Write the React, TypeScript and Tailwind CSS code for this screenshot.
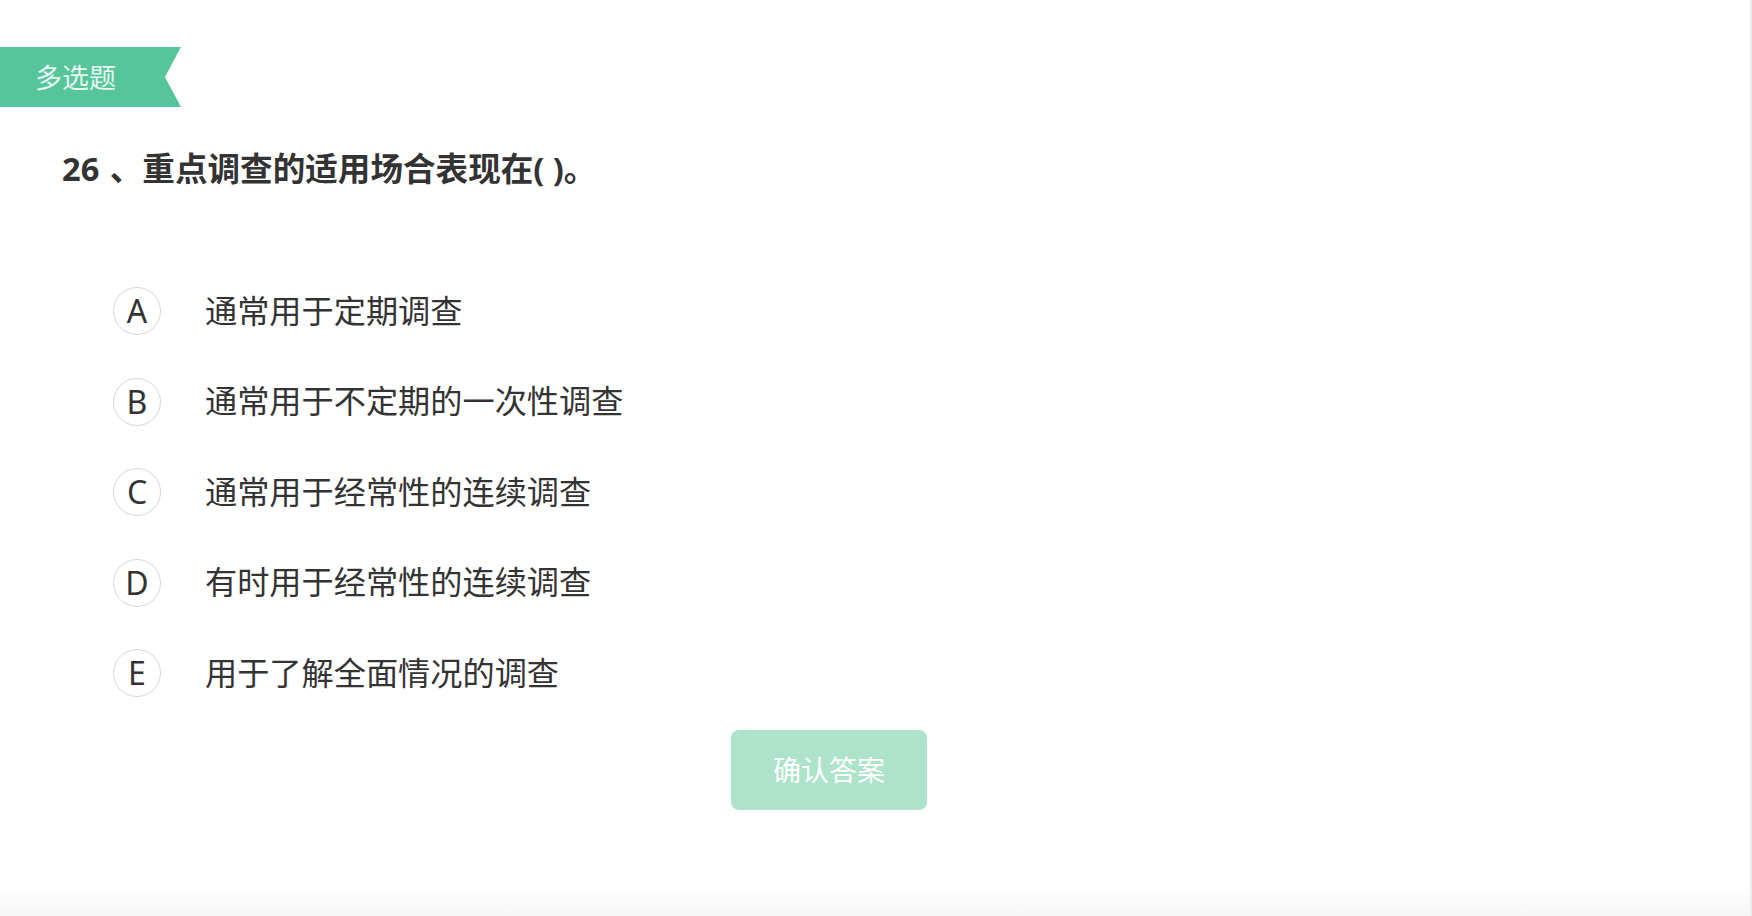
const options = [
  { key: "A", text: "通常用于定期调查" },
  { key: "B", text: "通常用于不定期的一次性调查" },
  { key: "C", text: "通常用于经常性的连续调查" },
  { key: "D", text: "有时用于经常性的连续调查" },
  { key: "E", text: "用于了解全面情况的调查" },
];

const font = "font-['Noto_Sans','Noto_Sans_CJK_SC',sans-serif]";

export default function App() {
  return (
    <div
      className={`relative h-[916px] w-[1752px] overflow-hidden border-r-2 border-[#ededed] bg-white ${font}`}
    >
      <div className="pt-[47px]">
        <div className="flex h-[60px] w-[181px] items-center bg-[#56c59b] pl-[35px] [clip-path:polygon(0_0,100%_0,165px_50%,100%_100%,0_100%)]">
          <span className="text-[27px] leading-none text-white/85">多选题</span>
        </div>
      </div>

      <h2 className="mt-[38px] pl-[62px] text-[32.6px] font-bold leading-[48px] text-[#333]">
        26 <span className="pl-[2px]">、</span>重点调查的适用场合表现在( )。
      </h2>

      <ul className="mt-[94px] flex flex-col gap-[42.5px] pl-[113px]">
        {options.map((o) => (
          <li key={o.key} className="flex h-[48px] items-center">
            <div className="flex h-[48px] w-[48px] items-center justify-center rounded-full border border-[#d6d6d6] text-[32px] font-normal text-[#333]">
              {o.key}
            </div>
            <span className="ml-[44px] text-[32.2px] leading-none text-[#333]">
              {o.text}
            </span>
          </li>
        ))}
      </ul>

      <div className="mt-[33px] pl-[731px]">
        <button className="flex h-[80px] w-[196px] items-center justify-center rounded-lg bg-[#ade3cb] text-[28px] text-white">
          确认答案
        </button>
      </div>

      <div className="absolute bottom-0 left-0 h-[30px] w-full bg-linear-to-b from-white to-[#f6f6f6]" />
    </div>
  );
}
